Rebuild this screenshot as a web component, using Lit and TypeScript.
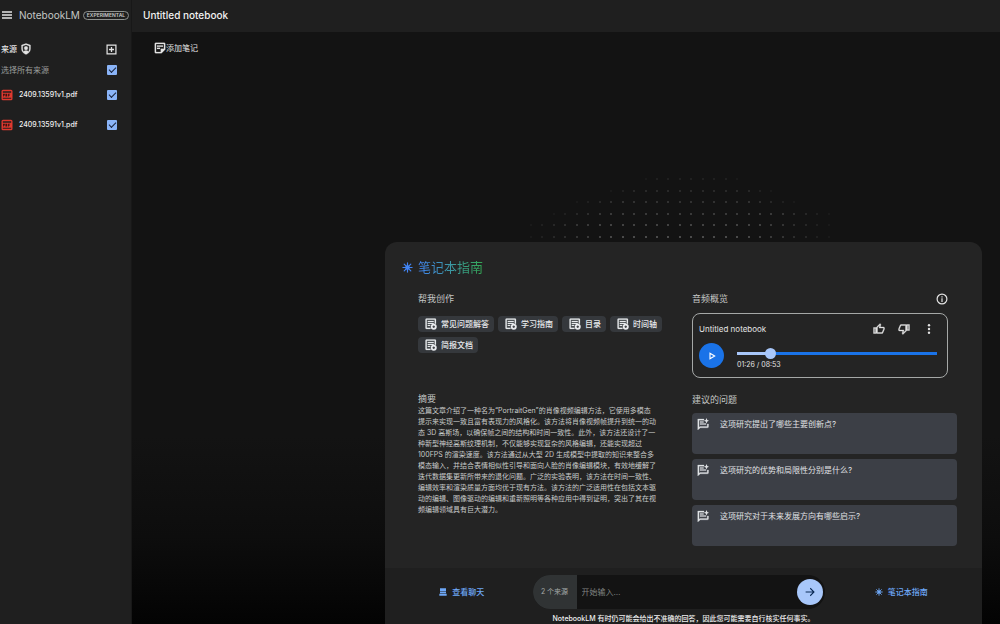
import { LitElement, html, css, svg } from "lit";
import { customElement, property, state } from "lit/decorators.js";

const ICONS: Record<string, unknown> = {
  menu: svg`<path d="M2 4.500h20v2.800H2zM2 10.600h20v2.800H2zM2 16.700h20v2.800H2z"/>`,
  shield: svg`<path fill-rule="evenodd" d="M12 1 3 4.200v7.300c0 5.400 3.800 9.700 9 11.500 5.200-1.800 9-6.100 9-11.500V4.200zM12 3.500l6.600 2.300v5.700c0 2-.6 3.800-1.600 5.300-1.300-1.200-3.100-1.800-5-1.800s-3.700.6-5 1.800c-1-1.500-1.600-3.300-1.600-5.300V5.800zM12 6.500a3.700 3.700 0 1 0 0 7.400 3.700 3.700 0 0 0 0-7.400z" stroke="currentColor" stroke-width=".5"/>`,
  add: svg`<path fill-rule="evenodd" d="M1 1h22v22H1zm2.700 2.700v16.600h16.600V3.700zM10.600 6.500h2.800v4.100h4.100v2.800h-4.100v4.100h-2.800v-4.100H6.500v-2.800h4.100z"/>`,
  note: svg`<path fill-rule="evenodd" d="M3.500 1.500h17a2 2 0 0 1 2 2V15l-7.500 7.500H3.500a2 2 0 0 1-2-2v-17a2 2 0 0 1 2-2zm.6 2.600v15.800h9.400v-6.400h6.400V4.100zM6 7h12v2.400H6zm0 4.500h6v2.400H6z" stroke="currentColor" stroke-width=".4"/>`,
  pdf: svg`<path fill-rule="evenodd" d="M4 1.500h16a3 3 0 0 1 3 3v15a3 3 0 0 1-3 3H4a3 3 0 0 1-3-3v-15a3 3 0 0 1 3-3zm-.4 2.800v3.200h16.800V4.300zm0 13v2.400h16.800v-2.400z"/><path fill="#3a1210" d="M4 9.500h3.600v3.400H5.500v2.300H4zm4.800 0h3.700v5.700H8.800zm5.200 0h4.200V11h-2.700v.8h2.200v1.300h-2.200v2.100H14z"/>`,
  doc: svg`<path fill-rule="evenodd" d="M3 1h17a2 2 0 0 1 2 2v8.500h-2.600V3.600H3.600v15.800H11V22H3a2 2 0 0 1-2-2V3a2 2 0 0 1 2-2zm2.500 4.800h12v2.400h-12zm0 4h12v2.400h-12zm0 4h5v2.400h-5z" stroke="currentColor" stroke-width=".4"/><path fill-rule="evenodd" d="M17.500 11.500a6 6 0 1 1 0 12 6 6 0 0 1 0-12zm-1 3.500v1.500H15v2h1.500V20h2v-1.500H20v-2h-1.500V15z"/>`,
  info: svg`<path fill-rule="evenodd" d="M12 1a11 11 0 1 1 0 22 11 11 0 0 1 0-22zm0 2.400a8.600 8.600 0 1 0 0 17.200 8.600 8.600 0 0 0 0-17.200zM10.800 6.500h2.400v2.400h-2.400zm0 4.200h2.400V18h-2.400z"/>`,
  up: svg`<path stroke="currentColor" stroke-width=".7" d="M9 21h9a2 2 0 0 0 1.840-1.220l3.020-7.050A2 2 0 0 0 23 12v-2a2 2 0 0 0-2-2h-6.310l.95-4.570.03-.32c0-.41-.17-.79-.44-1.060L14.170 1 7.580 7.590A2 2 0 0 0 7 9v10c0 1.100.9 2 2 2zM9 9l4.340-4.340L12 10h9v2l-3 7H9zM1 9h6v12H1zm2 2v8h2v-8z" fill-rule="evenodd"/>`,
  down: svg`<path stroke="currentColor" stroke-width=".7" d="M15 3H6c-.83 0-1.540.5-1.840 1.220l-3.020 7.050A2 2 0 0 0 1 12v2c0 1.100.9 2 2 2h6.310l-.95 4.570-.03.32c0 .41.17.79.44 1.060L9.830 23l6.590-6.590A2 2 0 0 0 17 15V5a2 2 0 0 0-2-2zm0 12-4.340 4.340L12 14H3v-2l3-7h9zm2-12h6v12h-6zm2 2v8h2V5z" fill-rule="evenodd"/>`,
  more: svg`<circle cx="12" cy="4.500" r="2.400"/><circle cx="12" cy="12" r="2.400"/><circle cx="12" cy="19.500" r="2.400"/>`,
  play: svg`<path fill="none" stroke="currentColor" stroke-width="3.400" d="M6 3.500v17L20 12z"/>`,
  question: svg`<path stroke="currentColor" stroke-width=".5" fill-rule="evenodd" d="M1.500 2H14v2.600H4.100v14L6 17h14.400v-5H23v5.600a2 2 0 0 1-2 2H6.800L1.500 24zM6 6.800h7v2.400H6zm0 4h12v2.400H6z"/><path d="m19 0 1.600 4L24.500 5.500 20.600 7 19 11l-1.600-4-3.900-1.500L17.400 4z"/>`,
  chat: svg`<path d="M3 1h18v9.500H3zM3 12h18v3.500H3zM1 17.500h22V23H1z"/>`,
  send: svg`<path fill="none" stroke="currentColor" stroke-width="2.600" d="M1.500 12H21M12.500 3l9 9-9 9"/>`,
  spark: svg`<path fill="none" stroke="currentColor" stroke-width="2.600" stroke-linecap="round" d="M12 2v20M2 12h20M4.800 4.800l14.400 14.400M19.200 4.800 4.800 19.200"/><circle cx="12" cy="12" r="5"/>`,
};

@customElement("nb-icon")
class NbIcon extends LitElement {
  @property() name = "";
  static styles = css`
    :host { display: inline-flex; flex: none; width: 12px; height: 12px; }
    svg { width: 100%; height: 100%; fill: currentColor; }
  `;
  render() {
    return html`<svg viewBox="0 0 24 24" aria-hidden="true">${ICONS[this.name]}</svg>`;
  }
}

/* Dots of the dome above the guide panel: [first column, last column] per row. */
const DOME = [[10, 18], [7, 21], [4, 23], [2, 26], [0, 26], [0, 26]];

@customElement("app-root")
class AppRoot extends LitElement {
  @state() private files = ["2409.13591v1.pdf", "2409.13591v1.pdf"];
  @state() private creations = ["常见问题解答", "学习指南", "目录", "时间轴", "简报文档"];
  @state() private questions = [
    "这项研究提出了哪些主要创新点?",
    "这项研究的优势和局限性分别是什么?",
    "这项研究对于未来发展方向有哪些启示?",
  ];

  static styles = css`
    :host {
      display: grid;
      grid-template-columns: 132px minmax(0, 1fr);
      height: 100vh;
      overflow: hidden;
      background: #131313;
      color: #e3e3e3;
      font: 8px/12px Inter, "Noto Sans CJK SC", sans-serif;
    }
    * { box-sizing: border-box; }
    h1, h2, h3, p, ul { margin: 0; padding: 0; font-weight: 400; }
    ul { list-style: none; }
    button, input { font: inherit; color: inherit; border: 0; background: none; padding: 0; margin: 0; }
    button { display: inline-flex; align-items: center; justify-content: center; }

    .side { background: #1f1f1f; border-right: 1px solid #181818; }
    .brand { display: flex; align-items: center; height: 30px; }
    .menu { padding: 0 6px 0 1px; }
    .logo { font-size: 10px; color: #c4c7c5; }
    .tag {
      margin-left: 3px; padding: 0 3px; border: 1px solid #8e918f; border-radius: 8px;
      font-size: 5px; line-height: 7px; font-weight: 600; color: #c4c7c5;
    }
    .row { display: flex; align-items: center; padding: 0 14px 0 1px; height: 22px; }
    .row > :last-child { margin-left: auto; }
    .sources { padding-top: 8px; }
    .sources h2 { font-size: 8px; font-weight: 500; margin-right: 3px; }
    .add nb-icon { width: 11px; height: 11px; }
    .all { color: #9a9d9b; height: 20px; }
    .file { height: 30px; font-size: 7px; font-weight: 500; color: #f0f0f0; }
    .file nb-icon { color: #e0392f; margin-right: 6px; }
    .tick {
      appearance: none; width: 10px; height: 10px; border-radius: 1px; background: #8ab4f8;
      display: grid; place-items: center;
    }
    .tick:checked::before {
      content: ""; width: 6px; height: 3px; border: solid #17233a; border-width: 0 0 1px 1px;
      transform: translateY(-1px) rotate(-45deg);
    }

    .main { display: flex; flex-direction: column; min-width: 0; background: linear-gradient(#131313 70%, #0d0d0d 86%, #030303); }
    .top { background: #1f1f1f; height: 32px; flex: none; padding: 0 11px 2px; display: flex; align-items: center; }
    .top h1 { font-size: 10px; line-height: 16px; font-weight: 500; color: #f2f2f2; }
    .tools { padding: 10px 22px 0; }
    .tools button { height: 12px; }
    .dome { margin: auto 26px 0 254px; height: 65px; display: flex; justify-content: center; }

    .panel {
      margin: 0 18px 0 253px; flex: none; background: #242424;
      border-radius: 12px 12px 0 0; overflow: hidden;
    }
    .guide { padding: 16px 25px 22px 17px; }
    .title { display: flex; align-items: center; gap: 5px; color: #4285f4; }
    .title h2 {
      font-size: 13px; line-height: 18px;
      background: linear-gradient(90deg, #4285f4, #34a853);
      background-clip: text; -webkit-background-clip: text; color: transparent;
    }
    .title nb-icon { width: 11px; height: 11px; }
    .cols { display: grid; grid-template-columns: minmax(0, 1fr) 265px; column-gap: 16px; padding: 17px 0 0 16px; }
    h3 { font-size: 9px; line-height: 12px; color: #c4c7c5; }
    .left { display: grid; grid-template-rows: 100px auto; }
    .chips { display: flex; flex-wrap: wrap; gap: 5px 4px; padding-top: 11px; }
    .chips button {
      height: 16px; gap: 4px; padding: 0 5px 0 7px; border-radius: 4px; background: #35383c;
      font-weight: 500; color: #e8eaed;
    }
    .summary { font-size: 7px; line-height: 11px; max-width: 239px; color: #c9cbca; }
    .audiohead { display: flex; justify-content: space-between; align-items: center; padding-right: 9px; }
    .player { margin: 8px 9px 0 0; height: 65px; border: 1px solid #a5a8a7; border-radius: 8px; padding: 7px 10px 0 6px; }
    .phead { display: flex; align-items: center; height: 16px; padding-right: 2px; }
    .phead span { flex: 1; }
    .phead button { margin-left: 13px; }
    .pbody { display: flex; gap: 13px; padding-top: 6px; }
    .play { width: 25px; height: 25px; border-radius: 50%; background: #1a73e8; color: #fff; flex: none; }
    .play nb-icon { width: 8px; height: 8px; }
    .track { flex: 1; min-width: 0; padding-top: 5px; }
    .time { font-size: 7px; }
    .seek {
      appearance: none; display: block; width: 100%; height: 11px;
      background: linear-gradient(90deg, #a8c7fa 17%, #1a73e8 17%) center / 100% 3px no-repeat;
    }
    .seek::-webkit-slider-thumb { appearance: none; width: 11px; height: 11px; border-radius: 50%; background: #a8c7fa; }
    .asks { padding-top: 16px; }
    .asks ul { display: grid; gap: 5px; padding-top: 7px; }
    .asks button {
      width: 100%; height: 41px; border-radius: 4px; background: #3c3f46;
      justify-content: flex-start; align-items: flex-start; gap: 11px; padding: 5px; color: #e0e2e5;
    }

    .bar { background: #1f1f1f; padding-top: 7px; height: 56px; }
    .controls { display: grid; grid-template-columns: 1fr 292px 1fr; align-items: center; padding-right: 10px; }
    .link { color: #6ea8f7; gap: 5px; font-weight: 500; padding-left: 6px; }
    .link nb-icon { width: 8px; height: 8px; }
    .ask { display: flex; align-items: center; height: 34px; border-radius: 17px; background: #131313; overflow: hidden; }
    .count { width: 44px; align-self: stretch; background: #303334; color: #a5a8a7; font-size: 7px; display: grid; place-items: center; }
    .ask input { flex: 1; min-width: 0; padding: 0 5px; outline: 0; }
    .ask input::placeholder { color: #808382; }
    .send { width: 26px; height: 26px; border-radius: 50%; background: #a8c7fa; color: #0b2a55; margin-right: 2px; }
    .send nb-icon { width: 10px; height: 10px; }
    .legal { text-align: center; font-size: 7px; line-height: 10px; padding-top: 5px; font-weight: 500; color: #f0f0f0; }
  `;

  render() {
    return html`
      <aside class="side">
        <div class="brand">
          <button class="menu" aria-label="菜单"><nb-icon name="menu"></nb-icon></button>
          <span class="logo">NotebookLM</span><span class="tag">EXPERIMENTAL</span>
        </div>
        <section class="sources">
          <div class="row">
            <h2>来源</h2><nb-icon name="shield"></nb-icon>
            <button class="add" aria-label="添加来源"><nb-icon name="add"></nb-icon></button>
          </div>
          <div class="row all"><label for="all">选择所有来源</label><input class="tick" id="all" type="checkbox" checked /></div>
          ${this.files.map((f, i) => html`
            <div class="row file">
              <nb-icon name="pdf"></nb-icon><label for="file${i}">${f}</label>
              <input class="tick" id="file${i}" type="checkbox" checked />
            </div>`)}
        </section>
      </aside>
      <main class="main">
        <header class="top"><h1>Untitled notebook</h1></header>
        <div class="tools"><button><nb-icon name="note"></nb-icon>添加笔记</button></div>
        <div class="dome">
          <svg width="300" height="65" aria-hidden="true">
            ${DOME.map(([a, b], r) => Array.from({ length: b - a + 1 }, (_, i) => {
              const edge = Math.min(i, b - a - i);
              return svg`<circle cx=${Math.round((a + i) * 11.45) + 1} cy=${Math.round(r * 11.5) + 2} r="0.800"
                fill="#fff" opacity=${Math.min(0.14 + r * 0.08, 0.08 + edge * 0.06)}></circle>`;
            }))}
          </svg>
        </div>
        <section class="panel">
          <div class="guide">
            <div class="title"><nb-icon name="spark"></nb-icon><h2>笔记本指南</h2></div>
            <div class="cols">
              <div class="left">
                <section>
                  <h3>帮我创作</h3>
                  <div class="chips">${this.creations.map((c) => html`<button><nb-icon name="doc"></nb-icon>${c}</button>`)}</div>
                </section>
                <section>
                  <h3>摘要</h3>
                  <p class="summary">这篇文章介绍了一种名为“PortraitGen”的肖像视频编辑方法，它使用多模态提示来实现一致且富有表现力的风格化。该方法将肖像视频帧提升到统一的动态 3D 高斯场，以确保帧之间的结构和时间一致性。此外，该方法还设计了一种新型神经高斯纹理机制，不仅能够实现复杂的风格编辑，还能实现超过 100FPS 的渲染速度。该方法通过从大型 2D 生成模型中提取的知识来整合多模态输入，并结合表情相似性引导和面向人脸的肖像编辑模块，有效地缓解了迭代数据集更新所带来的退化问题。广泛的实验表明，该方法在时间一致性、编辑效率和渲染质量方面均优于现有方法。该方法的广泛适用性在包括文本驱动的编辑、图像驱动的编辑和重新照明等各种应用中得到证明，突出了其在视频编辑领域具有巨大潜力。</p>
                </section>
              </div>
              <div>
                <section>
                  <div class="audiohead"><h3>音频概览</h3><button aria-label="信息"><nb-icon name="info"></nb-icon></button></div>
                  <div class="player">
                    <div class="phead">
                      <span>Untitled notebook</span>
                      <button aria-label="喜欢"><nb-icon name="up"></nb-icon></button>
                      <button aria-label="不喜欢"><nb-icon name="down"></nb-icon></button>
                      <button aria-label="更多"><nb-icon name="more"></nb-icon></button>
                    </div>
                    <div class="pbody">
                      <button class="play" aria-label="播放"><nb-icon name="play"></nb-icon></button>
                      <div class="track">
                        <input class="seek" type="range" min="0" max="533" value="80" aria-label="播放进度" />
                        <div class="time">01:26 / 08:53</div>
                      </div>
                    </div>
                  </div>
                </section>
                <section class="asks">
                  <h3>建议的问题</h3>
                  <ul>${this.questions.map((q) => html`<li><button><nb-icon name="question"></nb-icon><span>${q}</span></button></li>`)}</ul>
                </section>
              </div>
            </div>
          </div>
          <footer class="bar">
            <div class="controls">
              <button class="link"><nb-icon name="chat"></nb-icon>查看聊天</button>
              <div class="ask">
                <span class="count">2 个来源</span>
                <input type="text" placeholder="开始输入…" aria-label="开始输入" />
                <button class="send" aria-label="发送"><nb-icon name="send"></nb-icon></button>
              </div>
              <button class="link"><nb-icon name="spark"></nb-icon>笔记本指南</button>
            </div>
            <p class="legal">NotebookLM 有时仍可能会给出不准确的回答，因此您可能需要自行核实任何事实。</p>
          </footer>
        </section>
      </main>
    `;
  }
}
